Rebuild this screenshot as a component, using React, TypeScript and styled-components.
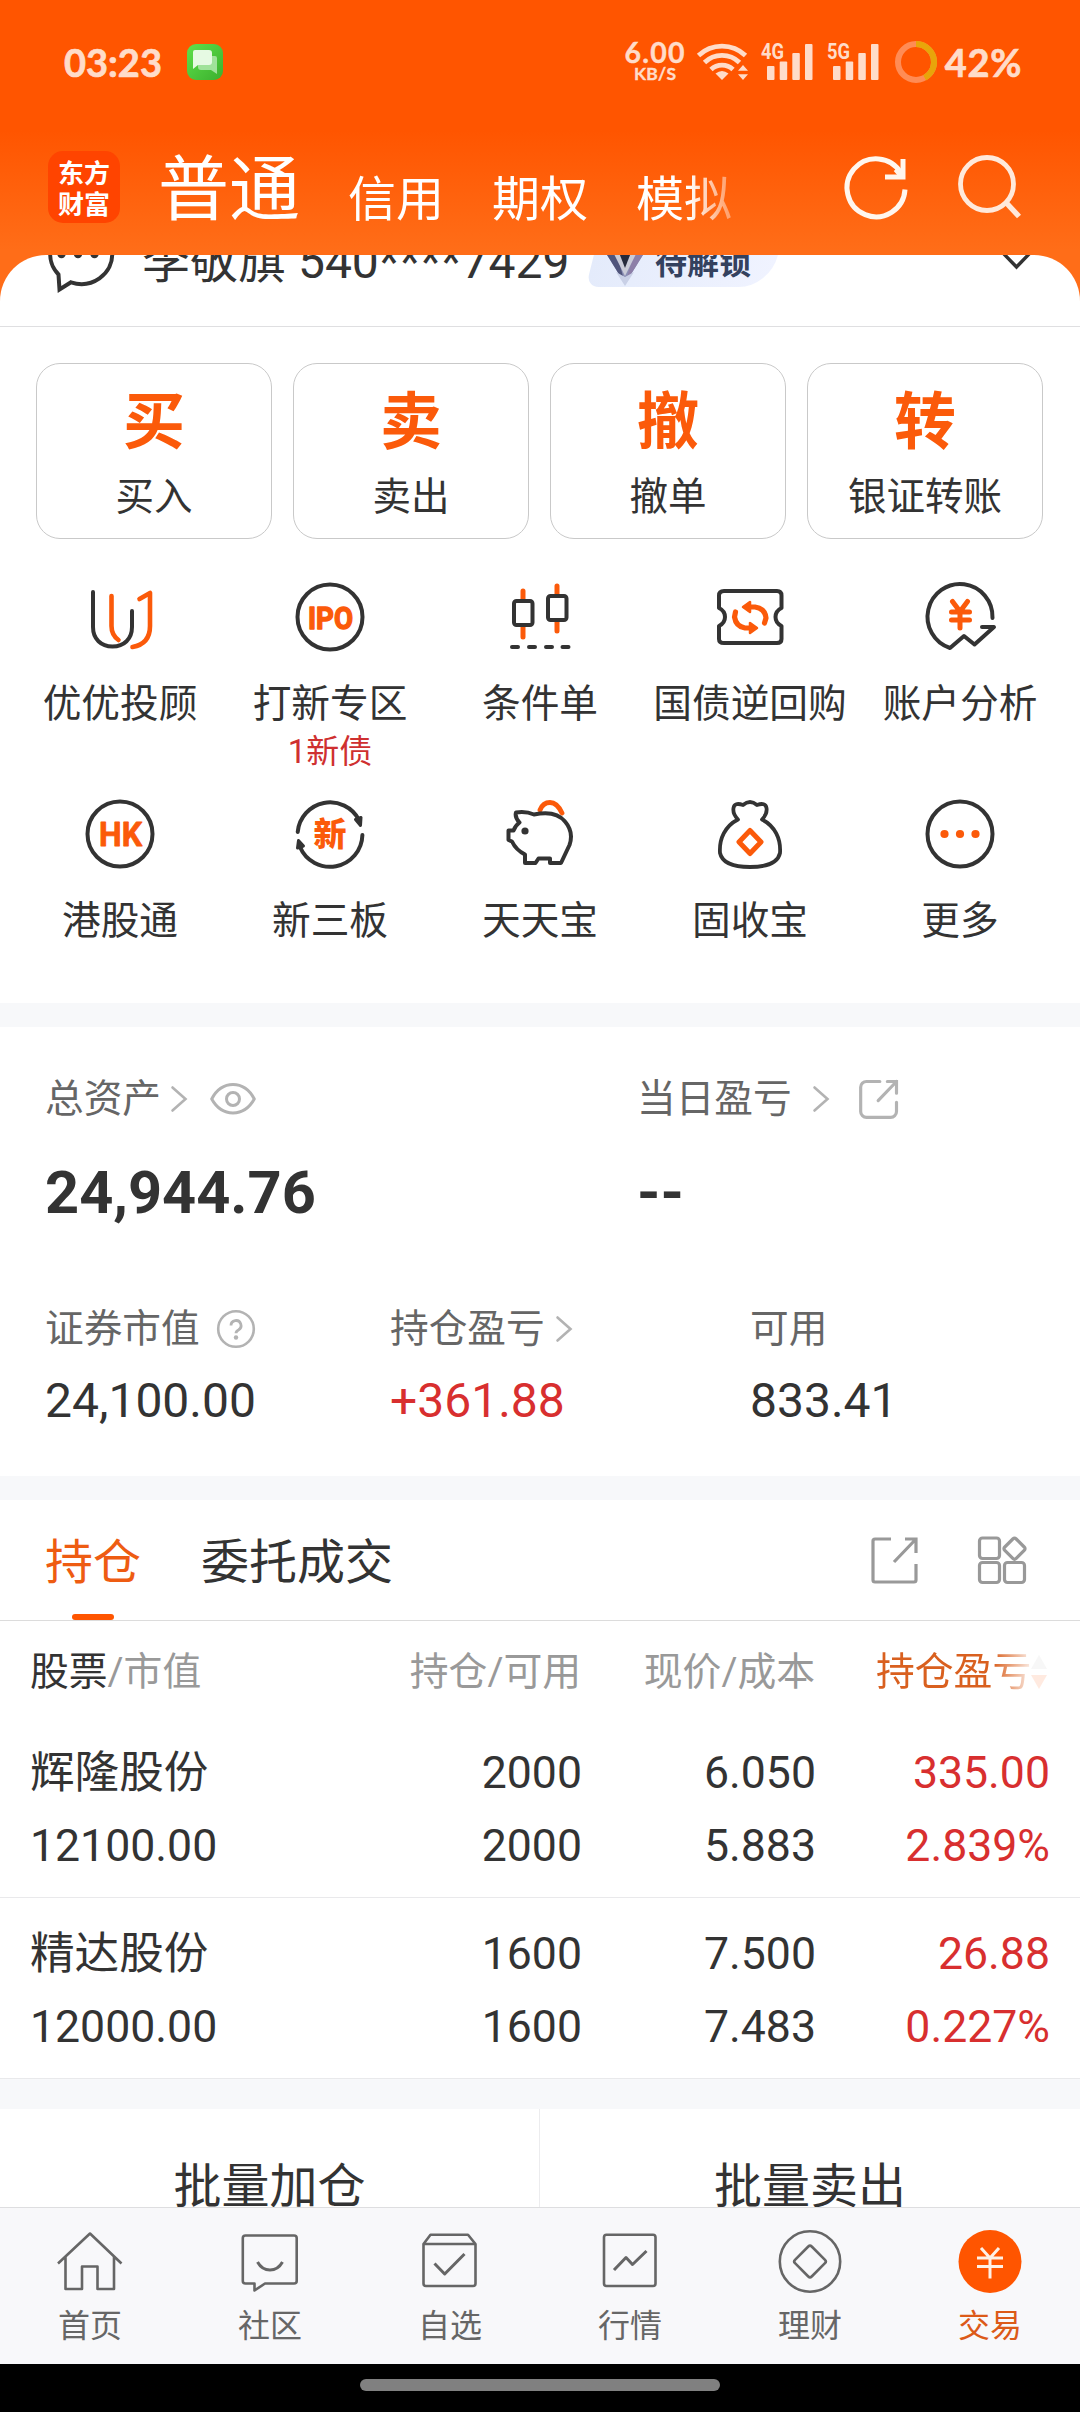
import React from "react";
import styled, { createGlobalStyle } from "styled-components";

const ORANGE = "#ff5500";
const INK = "#333333";
const RED = "#d82f2f";
const PALE = "#ffdcc9";

const GlobalStyle = createGlobalStyle`
  * { box-sizing: border-box; }
  body {
    margin: 0;
    background: #fff;
    color: ${INK};
    font-family: Roboto, "Noto Sans CJK SC", sans-serif;
  }
  svg { display: block; flex: none; overflow: visible; }
`;

const Screen = styled.div`
  display: flex;
  flex-direction: column;
  width: 1080px;
  height: 2412px;
  overflow: hidden;
  background: linear-gradient(#ff5500 0, #ff5500 130px, #ff6d18 250px, #ff6d18 100%);
`;

/* ---------- status bar ---------- */

const StatusBar = styled.header`
  display: flex;
  align-items: center;
  justify-content: space-between;
  height: 124px;
  padding: 0 58px 0 64px;
  color: ${PALE};
  font-family: Lato, sans-serif;
  font-weight: 700;
  -webkit-text-stroke: 0.7px ${PALE};
`;

const StatusGroup = styled.div`
  display: flex;
  align-items: center;
`;

const Clock = styled.span`
  width: 123px;
  font-size: 38px;
  line-height: 38px;
`;

const NetSpeed = styled.div`
  display: flex;
  flex-direction: column;
  align-items: center;
  width: 61px;
  margin-right: 11px;
  -webkit-text-stroke-width: 0.4px;
`;

const SpeedValue = styled.span`
  font-size: 28.5px;
  letter-spacing: 1.2px;
  line-height: 23px;
`;

const SpeedUnit = styled.span`
  font-size: 17.5px;
  letter-spacing: 0.3px;
  line-height: 20px;
`;

const Battery = styled.span`
  margin-left: 8px;
  font-size: 38px;
  letter-spacing: 0.7px;
  line-height: 38px;
`;

/* ---------- title bar ---------- */

const TitleBar = styled.div`
  display: flex;
  align-items: flex-start;
  height: 131px;
  padding-left: 48px;
`;

const Logo = styled.div`
  display: grid;
  place-content: center;
  width: 72px;
  height: 72px;
  margin-top: 27px;
  border-radius: 15px;
  background: #ff4400;
  color: #fff;
  font-family: "Noto Sans CJK SC", sans-serif;
  font-size: 26px;
  font-weight: 700;
  line-height: 31px;
  text-align: center;
`;

const Accounts = styled.nav`
  display: flex;
  align-items: flex-start;
  gap: 48px;
  width: 586px;
  margin-left: 38px;
  color: #fff;
  white-space: nowrap;
  mask-image: linear-gradient(90deg, #000 530px, rgba(0, 0, 0, 0.4) 570px);
`;

const AccountTab = styled.span<{ $active?: boolean }>`
  margin-top: ${(p) => (p.$active ? 30 : 52)}px;
  font-size: ${(p) => (p.$active ? 71 : 48)}px;
  line-height: ${(p) => (p.$active ? 72 : 48)}px;
`;

const TitleActions = styled.div`
  display: flex;
  gap: 40px;
  margin: 28px 0 0 98px;
`;

/* ---------- sheet ---------- */

const Sheet = styled.main`
  display: flex;
  flex-direction: column;
  height: 1952px;
  overflow: hidden;
  border-radius: 46px 46px 0 0;
  background: #fff;
`;

const AccountStrip = styled.div`
  flex: none;
  height: 72px;
  overflow: hidden;
  border-bottom: 1px solid #dfdfe1;
`;

const AccountRow = styled.div`
  display: flex;
  align-items: center;
  height: 80px;
  margin-top: -33px;
  padding: 0 46px 0 42px;
`;

const AccountName = styled.span`
  margin-left: 26px;
  font-size: 48px;
  line-height: 80px;
  white-space: pre;
`;

const LevelBadge = styled.div`
  display: flex;
  align-items: center;
  width: 184px;
  height: 49px;
  margin-left: 23px;
  color: #34415e;
  font-size: 32px;
  font-weight: 700;
  background: linear-gradient(90deg, #e4ebfb, #f0f3ff);
  border-radius: 14px 20px 34px 14px;
  transform: skewX(-14deg);
`;

const BadgeInner = styled.div`
  display: flex;
  align-items: center;
  gap: 9px;
  padding-left: 12px;
  line-height: 44px;
  transform: skewX(14deg);
`;

const Spacer = styled.div`
  flex: 1;
`;

const Trades = styled.section`
  display: grid;
  flex: none;
  grid-template-columns: repeat(4, 236px);
  gap: 21px;
  padding: 36px 36px 0;
`;

const TradeCard = styled.button`
  display: flex;
  flex-direction: column;
  align-items: center;
  height: 176px;
  padding: 28px 0 0;
  border: 1px solid #c9c9c9;
  border-radius: 24px;
  background: #fff;
  color: ${INK};
  font-family: inherit;
`;

const TradeGlyph = styled.span`
  color: #fb5a0a;
  font-size: 62px;
  font-weight: 700;
  line-height: 62px;
`;

const TradeLabel = styled.span`
  margin-top: 23px;
  font-size: 38.5px;
  line-height: 40px;
`;

const Services = styled.section`
  display: grid;
  flex: none;
  grid-template-columns: repeat(5, 210px);
  grid-template-rows: 217px 206px;
  padding: 41px 15px 0;
`;

const Service = styled.div`
  display: flex;
  flex-direction: column;
  align-items: center;
`;

const ServiceLabel = styled.span`
  margin-top: 32px;
  font-size: 38.7px;
  line-height: 40px;
  white-space: nowrap;
`;

const ServiceNote = styled.span`
  margin-top: 11px;
  color: #cf3030;
  font-size: 33px;
  line-height: 34px;
`;

const Band = styled.div<{ $h: number }>`
  flex: none;
  height: ${(p) => p.$h}px;
  background: #f7f8fa;
`;

/* ---------- assets ---------- */

const Assets = styled.section`
  flex: none;
  height: 449px;
  padding: 50px 0 0 45px;
`;

const AssetGrid = styled.div<{ $cols: string }>`
  display: grid;
  grid-template-columns: ${(p) => p.$cols};
`;

const AssetLabel = styled.div<{ $lift?: number }>`
  display: flex;
  align-items: center;
  height: 48px;
  padding-bottom: ${(p) => p.$lift ?? 0}px;
  color: #666;
  font-size: 38.7px;
  line-height: 48px;
`;

const Gap = styled.i<{ $w: number }>`
  width: ${(p) => p.$w}px;
`;

const Total = styled.div`
  margin: 38px 0 83px;
  font-size: 59.5px;
  font-weight: 700;
  line-height: 60px;
`;

const Amount = styled.div<{ $up?: boolean }>`
  margin-top: 23px;
  color: ${(p) => (p.$up ? RED : INK)};
  font-size: 48px;
  line-height: 48px;
`;

/* ---------- positions ---------- */

const TabBar = styled.div`
  display: flex;
  flex: none;
  align-items: center;
  height: 121px;
  padding: 0 53px 0 45px;
  border-bottom: 1px solid #dcdcdc;
`;

const Tab = styled.span<{ $active?: boolean }>`
  position: relative;
  height: 120px;
  margin-right: 60px;
  color: ${(p) => (p.$active ? "#ee5c12" : INK)};
  font-size: 48px;
  line-height: 126px;

  &::after {
    content: "";
    display: ${(p) => (p.$active ? "block" : "none")};
    position: absolute;
    bottom: 0;
    left: 27px;
    width: 42px;
    height: 6px;
    border-radius: 3px;
    background: ${ORANGE};
  }
`;

const Cols = styled.div`
  display: grid;
  flex: none;
  grid-template-columns: 315px 236px 234px 234px;
  padding: 0 31px 0 30px;
  text-align: right;
`;

const HeadRow = styled(Cols)`
  height: 96px;
  padding-top: 7px;
  color: #999;
  font-size: 38.8px;
  line-height: 87px;
`;

const HeadFirst = styled.span`
  text-align: left;
`;

const Dark = styled.b`
  color: ${INK};
  font-weight: 400;
`;

const SortHead = styled.div`
  display: flex;
  align-items: center;
  height: 87px;
  padding-left: 61px;
  color: #d9601f;
  white-space: nowrap;
  mask-image: linear-gradient(90deg, #000 178px, rgba(0, 0, 0, 0.12) 216px);
`;

const StockRow = styled(Cols)`
  height: 181px;
  padding-top: 20px;
  border-bottom: 1px solid #e9e9eb;
  font-size: 44.6px;
`;

const Cell = styled.div<{ $first?: boolean; $up?: boolean }>`
  margin-right: -1px;
  color: ${(p) => (p.$up ? RED : "inherit")};
  text-align: ${(p) => (p.$first ? "left" : "right")};
  line-height: 73px;
`;

const Batch = styled.section`
  display: grid;
  flex: none;
  grid-template-columns: 540px 540px;
  height: 98px;
  overflow: hidden;
`;

const BatchButton = styled.div`
  height: 110px;
  padding-top: 54px;
  font-size: 48px;
  line-height: 48px;
  text-align: center;

  &:first-child {
    border-right: 1px solid #ececee;
  }
`;

/* ---------- bottom navigation ---------- */

const BottomNav = styled.nav`
  display: grid;
  flex: none;
  grid-template-columns: repeat(6, 180px);
  height: 157px;
  border-top: 1px solid #dedee0;
  background: #f8f8fa;
`;

const NavItem = styled.div<{ $active?: boolean }>`
  display: flex;
  flex-direction: column;
  align-items: center;
  padding-top: 17px;
  color: ${(p) => (p.$active ? "#dc5a18" : "#666")};
`;

const NavLabel = styled.span`
  margin-top: 9px;
  font-size: 32px;
  line-height: 40px;
`;

const GestureBar = styled.div`
  display: flex;
  flex: none;
  justify-content: center;
  height: 48px;
  padding-top: 15px;
  background: #000;
`;

const Handle = styled.div`
  width: 360px;
  height: 12px;
  border-radius: 6px;
  background: #808080;
`;

/* ---------- icons ---------- */

const MessageIcon = () => (
  <svg width="36" height="36" viewBox="0 0 36 36">
    <defs>
      <linearGradient id="msg" x1="0" y1="0" x2="1" y2="1">
        <stop offset="0" stopColor="#5fe04a" />
        <stop offset="1" stopColor="#3bb02e" />
      </linearGradient>
    </defs>
    <rect width="36" height="36" rx="9" fill="url(#msg)" />
    <path d="M13 12h15a2 2 0 0 1 2 2v16l-6-4H14a3 3 0 0 1-3-3v-8z" fill="#a0e29a" />
    <path d="M8 6h14a3 3 0 0 1 3 3v9a3 3 0 0 1-3 3H11l-5 4V8a2 2 0 0 1 2-2z" fill="#e6fae3" />
  </svg>
);

const WifiIcon = () => (
  <svg width="52" height="38" viewBox="0 0 52 38" fill="none" stroke={PALE} strokeWidth="4.8">
    <path d="M1.5 12.5a34 34 0 0 1 47 0" />
    <path d="M7.5 19.5a25 25 0 0 1 35 0" />
    <path d="M14 26.5a16 16 0 0 1 22 0" />
    <path d="M25 37l-6.500-6.500q6.500-5 13 0z" fill={PALE} stroke="none" />
    <path d="M46 22l5 5.800h-10zM46 37l5-5.800h-10z" fill={PALE} stroke="none" />
  </svg>
);

const SignalIcon = ({ label }: { label: string }) => (
  <svg width="54" height="38" viewBox="0 0 54 38" fill={PALE}>
    <text x="0" y="16" fontSize="22" fontFamily="Roboto, sans-serif" fontWeight="700" textLength="23" lengthAdjust="spacingAndGlyphs" stroke="none">
      {label}
    </text>
    <rect x="6" y="23" width="7.500" height="14" rx="1" />
    <rect x="18.700" y="18.500" width="7.500" height="18.500" rx="1" />
    <rect x="31.300" y="10" width="7.500" height="27" rx="1" />
    <rect x="44" y="1" width="7.500" height="36" rx="1" />
  </svg>
);

const BatteryRing = () => (
  <svg width="42" height="42" viewBox="0 0 42 42" fill="none" strokeWidth="6">
    <circle cx="21" cy="21" r="18" stroke="#ff8c55" />
    <path d="M21 3A18 18 0 0 1 29.700 36.800" stroke="#e8a50a" />
  </svg>
);

const RefreshIcon = () => (
  <svg width="70" height="70" viewBox="0 0 70 70" fill="none" stroke="#fff6ee" strokeWidth="5">
    <path d="M63 37.500A29 29 0 1 1 59 21" />
    <path d="M61 7V25H43" />
    <path d="M54 17l6 7" strokeWidth="6" />
  </svg>
);

const SearchIcon = () => (
  <svg width="70" height="70" viewBox="0 0 70 70" fill="none" stroke="#ffe9db" strokeWidth="4.800">
    <circle cx="35" cy="32" r="26.500" />
    <path d="M54 50.500L67 64.500" strokeWidth="5.500" />
  </svg>
);

const ChatIcon = () => (
  <svg width="74" height="80" viewBox="0 0 74 80" fill="none" stroke={INK} strokeWidth="4">
    <path d="M16.500 52.500A31 29.500 0 1 1 29 60.300L17.500 67.500Z" />
    <g fill={INK} stroke="none">
      <circle cx="19.500" cy="32" r="4.200" />
      <circle cx="36" cy="32" r="4.200" />
      <circle cx="52.500" cy="32" r="4.200" />
    </g>
  </svg>
);

const GemIcon = () => (
  <svg width="42" height="49" viewBox="0 0 42 49">
    <path d="M0 12h42L21 46z" fill="#8b8fb5" />
    <path d="M0 12h12L21 46z" fill="#50557c" />
    <path d="M42 12H31L21 46z" fill="#8d7fa8" />
    <path d="M8 12h26L21 38z" fill="#c9cbd8" />
    <path d="M14 12h14l-7 18z" fill="#252a3c" />
    <path d="M12 34l9 5 9-5-9 14z" fill="#c9d0e6" />
  </svg>
);

const DownIcon = () => (
  <svg width="34" height="24" viewBox="0 0 34 24" fill="none" stroke={INK} strokeWidth="3.400">
    <path d="M2 2l14.500 15L31 2" />
  </svg>
);

const Chevron = () => (
  <svg width="16" height="28" viewBox="0 0 16 28" fill="none" stroke="#b3b3b3" strokeWidth="2.600" strokeLinecap="round">
    <path d="M1.500 2.500L14.500 14 1.500 25.500" />
  </svg>
);

const EyeIcon = () => (
  <svg width="46" height="34" viewBox="0 0 46 34" fill="none" stroke="#b3b3b3" strokeWidth="3">
    <path d="M1.700 17C12-2.200 34-2.200 44.300 17 34 35.500 12 35.500 1.700 17z" strokeLinejoin="round" />
    <circle cx="23" cy="17" r="6.500" />
  </svg>
);

const HelpIcon = () => (
  <svg width="40" height="40" viewBox="0 0 40 40" fill="none" stroke="#b3b3b3" strokeWidth="2.600">
    <circle cx="20" cy="20" r="17.800" />
    <path d="M15 16.500a5 5 0 1 1 7.400 4.400q-2.400 1.200-2.400 3.400" strokeWidth="2.800" />
    <circle cx="20" cy="28.500" r="2.200" fill="#b3b3b3" stroke="none" />
  </svg>
);

const ShareIcon = ({ size, color, round }: { size: number; color: string; round: number }) => (
  <svg width={size} height={size} viewBox="0 0 48 48" fill="none" stroke={color} strokeWidth={round > 3 ? 3.8 : 3.2} strokeLinecap={round > 3 ? "round" : "butt"}>
    <path d={`M${round > 3 ? 25 : 20} 3H${2 + round}a${round} ${round} 0 0 0-${round} ${round}V${46 - round}a${round} ${round} 0 0 0 ${round} ${round}H${45 - round}a${round} ${round} 0 0 0 ${round}-${round}V28`} />
    <path d="M34 3H45V17M45 3L23 26" />
  </svg>
);

const ModulesIcon = () => (
  <svg width="50" height="50" viewBox="0 0 50 50" fill="none" stroke="#999" strokeWidth="3.200">
    <rect x="2.500" y="3" width="20" height="20.500" rx="3" />
    <rect x="2.500" y="27.500" width="20" height="20" rx="3" />
    <rect x="27.500" y="27.500" width="20" height="20" rx="3" />
    <path d="M35.800 4q1.700-1.700 3.400 0l8 8q1.700 1.700 0 3.400l-8 8q-1.700 1.700-3.400 0l-8-8q-1.700-1.700 0-3.400z" />
  </svg>
);

const SortIcon = () => (
  <svg width="16" height="36" viewBox="0 0 16 36">
    <path d="M8 1l8 14H0z" fill="#bbb" />
    <path d="M8 35l8-14H0z" fill={ORANGE} />
  </svg>
);

const O = "#fb5a0a";

const Glyph = ({ children }: { children: React.ReactNode }) => (
  <svg width="72" height="72" viewBox="0 0 72 72" fill="none" stroke={INK} strokeWidth="4" strokeLinecap="round" strokeLinejoin="round">
    {children}
  </svg>
);

const services: { label: string; note?: string; icon: React.ReactNode }[] = [
  {
    label: "优优投顾",
    icon: (
      <Glyph>
        <path d="M9 12V47C9 59 17 66.500 28.500 66.500S48 59 48 47V31" />
        <g stroke={O} strokeWidth="4.600">
          <path d="M27.500 16V46Q27.500 55 34.500 60" />
          <path d="M55.500 19L66 13V46Q66 64 48.500 67" />
        </g>
      </Glyph>
    ),
  },
  {
    label: "打新专区",
    note: "1新债",
    icon: (
      <Glyph>
        <circle cx="36" cy="37" r="32.500" />
        <text x="14" y="48.500" fontSize="31" fontWeight="700" fontFamily="Roboto, sans-serif" fill={O} stroke={O} strokeWidth="1.400" textLength="45" lengthAdjust="spacingAndGlyphs">
          IPO
        </text>
      </Glyph>
    ),
  },
  {
    label: "条件单",
    icon: (
      <Glyph>
        <path d="M19 11V57M53 6V51" stroke={O} strokeWidth="5" />
        <rect x="10" y="21" width="18.500" height="24" rx="2.500" fill="#fff" />
        <rect x="44" y="16" width="18.500" height="24" rx="2.500" fill="#fff" />
        <path d="M8 67h6M25 67h6M42 67h6M58.500 67h6" />
      </Glyph>
    ),
  },
  {
    label: "国债逆回购",
    icon: (
      <Glyph>
        <path d="M10 11H63Q67.500 11 67.500 15.500V28Q61.500 31 61.500 37T67.500 46V59Q67.500 63 63 63H10Q5 63 5 59V46Q11 43 11 37T5 28V15.500Q5 11 10 11z" />
        <g stroke={O} strokeWidth="5.200">
          <path d="M33 27H41Q51 28.500 52 38L50.500 43" />
          <path d="M39 48H31Q22 46.500 20.500 37L21.500 32" />
          <path d="M29 27L36 22V32zM43 48L36 43V53z" fill={O} strokeWidth="2.500" />
        </g>
      </Glyph>
    ),
  },
  {
    label: "账户分析",
    icon: (
      <Glyph>
        <path d="M68.500 38A32.500 32.800 0 1 0 26 68L40 56 50.500 64.500 70 47H58" />
        <path d="M28.500 21.500L36 31.500 43.500 21.500M27.500 32H45.500M27.500 40H45.500M36 32V48" stroke={O} strokeWidth="5" />
      </Glyph>
    ),
  },
  {
    label: "港股通",
    icon: (
      <Glyph>
        <circle cx="36" cy="37" r="32.500" />
        <text x="15" y="48.500" fontSize="33" fontWeight="700" fontFamily="Roboto, sans-serif" fill={O} stroke={O} strokeWidth="0.800" textLength="43" lengthAdjust="spacingAndGlyphs">
          HK
        </text>
      </Glyph>
    ),
  },
  {
    label: "新三板",
    icon: (
      <Glyph>
        <path d="M3.700 35A32.500 32.500 0 0 1 65 23M68.400 38A32.500 32.500 0 0 1 6 50" />
        <path d="M66.500 28.500L61.500 22.500 67 20.500zM4.500 43.500L9.500 49 3.500 51z" fill={INK} strokeWidth="3" />
        <text x="36" y="48.500" fontSize="33" fontWeight="900" fontFamily="Noto Sans CJK SC, sans-serif" fill={O} stroke="none" textAnchor="middle">
          新
        </text>
      </Glyph>
    ),
  },
  {
    label: "天天宝",
    icon: (
      <Glyph>
        <path d="M36 13Q39 5.500 46 5.500T58 16" stroke={O} strokeWidth="4.800" />
        <path
          d="M12 15.500Q22 14 30 17.500C44 14.500 55 17 61 24.500Q70 35 65.500 48L57 66H46V61.500H34.500L31.500 66H21V57.500Q12 53 8 44.500L4.500 43V33.500H9.500Q11 29 15.500 25.500Q10.500 20 12 15.500z"
          fill="#fff"
        />
        <circle cx="21" cy="34" r="3.600" fill={INK} stroke="none" />
      </Glyph>
    ),
  },
  {
    label: "固收宝",
    icon: (
      <Glyph>
        <path d="M24 22.500Q18.500 17 19.500 11T29 8Q36 2 43 8Q51.500 5 52.500 11T48 22.500C61 29 67 42 66 56Q63 70 36 70T6 56C5 42 11 29 24 22.500z" strokeWidth="3.800" />
        <path d="M36 33.500L47 45 36 56.500 25 45z" stroke={O} strokeWidth="5" />
      </Glyph>
    ),
  },
  {
    label: "更多",
    icon: (
      <Glyph>
        <circle cx="36" cy="37" r="32.500" />
        <g fill={O} stroke="none">
          <circle cx="20.500" cy="37" r="4.100" />
          <circle cx="36" cy="37" r="4.100" />
          <circle cx="51.500" cy="37" r="4.100" />
        </g>
      </Glyph>
    ),
  },
];

const NavGlyph = ({ children }: { children: React.ReactNode }) => (
  <svg width="72" height="72" viewBox="0 0 72 72" fill="none" stroke="#666" strokeWidth="2.600" strokeLinejoin="round">
    {children}
  </svg>
);

const navItems: { label: string; active?: boolean; icon: React.ReactNode }[] = [
  {
    label: "首页",
    icon: (
      <NavGlyph>
        <path d="M4 38.500L36 8.500 67.500 38.500M11.500 32V64H28V41.500H43.500V64H60V32" />
      </NavGlyph>
    ),
  },
  {
    label: "社区",
    icon: (
      <NavGlyph>
        <path d="M11.500 10.500H60Q62.700 10.500 62.700 13V56Q62.700 58.500 60 58.500H31L20.500 65.500V58.500H11.500Q8.800 58.500 8.800 56V13Q8.800 10.500 11.500 10.500z" />
        <path d="M23.500 37Q28 45 36 45T48.500 37" strokeWidth="3" />
      </NavGlyph>
    ),
  },
  {
    label: "自选",
    icon: (
      <NavGlyph>
        <path d="M9.500 19L16.500 9.800H54L61.500 19V58.500Q61.500 61 59 61H12Q9.500 61 9.500 58.500zH61.500" />
        <path d="M20.500 38.500L30.700 49 50.500 29" strokeWidth="3" />
      </NavGlyph>
    ),
  },
  {
    label: "行情",
    icon: (
      <NavGlyph>
        <rect x="10" y="9.800" width="51.500" height="51.200" rx="2.500" />
        <path d="M20 45L32 32.500 38.500 39.500 52.500 26" strokeWidth="3" />
      </NavGlyph>
    ),
  },
  {
    label: "理财",
    icon: (
      <NavGlyph>
        <circle cx="36" cy="36.500" r="30.200" />
        <path d="M34.300 21.500Q36 19.800 37.700 21.500L51 34.800Q52.700 36.500 51 38.200L37.700 51.500Q36 53.200 34.300 51.500L21 38.200Q19.300 36.500 21 34.800z" />
      </NavGlyph>
    ),
  },
  {
    label: "交易",
    active: true,
    icon: (
      <NavGlyph>
        <circle cx="36" cy="36.500" r="31.500" fill={ORANGE} stroke="none" />
        <path d="M27 23L36 33 45 23M23 33H49M23 41.500H49M36 33V53.500" stroke="#fff0e6" strokeWidth="3" />
      </NavGlyph>
    ),
  },
];

const trades = [
  ["买", "买入"],
  ["卖", "卖出"],
  ["撤", "撤单"],
  ["转", "银证转账"],
];

const stocks = [
  { name: "辉隆股份", value: "12100.00", held: "2000", free: "2000", price: "6.050", cost: "5.883", gain: "335.00", rate: "2.839%" },
  { name: "精达股份", value: "12000.00", held: "1600", free: "1600", price: "7.500", cost: "7.483", gain: "26.88", rate: "0.227%" },
];

export default function App() {
  return (
    <Screen>
      <GlobalStyle />
      <StatusBar>
        <StatusGroup>
          <Clock>03:23</Clock>
          <MessageIcon />
        </StatusGroup>
        <StatusGroup>
          <NetSpeed>
            <SpeedValue>6.00</SpeedValue>
            <SpeedUnit>KB/S</SpeedUnit>
          </NetSpeed>
          <WifiIcon />
          <Gap $w={12} />
          <SignalIcon label="4G" />
          <Gap $w={12} />
          <SignalIcon label="5G" />
          <Gap $w={14} />
          <BatteryRing />
          <Battery>42%</Battery>
        </StatusGroup>
      </StatusBar>

      <TitleBar>
        <Logo>
          <span>东方</span>
          <span>财富</span>
        </Logo>
        <Accounts>
          <AccountTab $active>普通</AccountTab>
          <AccountTab>信用</AccountTab>
          <AccountTab>期权</AccountTab>
          <AccountTab>模拟</AccountTab>
        </Accounts>
        <TitleActions>
          <RefreshIcon />
          <SearchIcon />
        </TitleActions>
      </TitleBar>

      <Sheet>
        <AccountStrip>
          <AccountRow>
            <ChatIcon />
            <AccountName>李敬旗 540****7429</AccountName>
            <LevelBadge>
              <BadgeInner>
                <GemIcon />
                待解锁
              </BadgeInner>
            </LevelBadge>
            <Spacer />
            <DownIcon />
          </AccountRow>
        </AccountStrip>

        <Trades>
          {trades.map(([glyph, label]) => (
            <TradeCard key={label}>
              <TradeGlyph>{glyph}</TradeGlyph>
              <TradeLabel>{label}</TradeLabel>
            </TradeCard>
          ))}
        </Trades>

        <Services>
          {services.map((s) => (
            <Service key={s.label}>
              {s.icon}
              <ServiceLabel>{s.label}</ServiceLabel>
              {s.note && <ServiceNote>{s.note}</ServiceNote>}
            </Service>
          ))}
        </Services>

        <Band $h={24} />

        <Assets>
          <AssetGrid $cols="592px 1fr">
            <div>
              <AssetLabel $lift={5}>
                总资产
                <Gap $w={10} />
                <Chevron />
                <Gap $w={23} />
                <EyeIcon />
              </AssetLabel>
              <Total>24,944.76</Total>
            </div>
            <div>
              <AssetLabel $lift={4}>
                当日盈亏
                <Gap $w={21} />
                <Chevron />
                <Gap $w={30} />
                <ShareIcon size={40} color="#b3b3b3" round={7} />
              </AssetLabel>
              <Total>--</Total>
            </div>
          </AssetGrid>
          <AssetGrid $cols="345px 360px 1fr">
            <div>
              <AssetLabel $lift={2}>
                证券市值
                <Gap $w={16} />
                <HelpIcon />
              </AssetLabel>
              <Amount>24,100.00</Amount>
            </div>
            <div>
              <AssetLabel $lift={2}>
                持仓盈亏
                <Gap $w={11} />
                <Chevron />
              </AssetLabel>
              <Amount $up>+361.88</Amount>
            </div>
            <div>
              <AssetLabel $lift={2}>可用</AssetLabel>
              <Amount>833.41</Amount>
            </div>
          </AssetGrid>
        </Assets>

        <Band $h={24} />

        <TabBar>
          <Tab $active>持仓</Tab>
          <Tab>委托成交</Tab>
          <Spacer />
          <ShareIcon size={48} color="#999" round={2} />
          <Gap $w={58} />
          <ModulesIcon />
        </TabBar>

        <HeadRow>
          <HeadFirst>
            <Dark>股票</Dark>/市值
          </HeadFirst>
          <span>持仓/可用</span>
          <span>现价/成本</span>
          <SortHead>
            持仓盈亏
            <SortIcon />
          </SortHead>
        </HeadRow>

        {stocks.map((s) => (
          <StockRow key={s.name}>
            <Cell $first>
              {s.name}
              <br />
              {s.value}
            </Cell>
            <Cell>
              {s.held}
              <br />
              {s.free}
            </Cell>
            <Cell>
              {s.price}
              <br />
              {s.cost}
            </Cell>
            <Cell $up>
              {s.gain}
              <br />
              {s.rate}
            </Cell>
          </StockRow>
        ))}

        <Band $h={30} />

        <Batch>
          <BatchButton>批量加仓</BatchButton>
          <BatchButton>批量卖出</BatchButton>
        </Batch>
      </Sheet>

      <BottomNav>
        {navItems.map((n) => (
          <NavItem key={n.label} $active={n.active}>
            {n.icon}
            <NavLabel>{n.label}</NavLabel>
          </NavItem>
        ))}
      </BottomNav>
      <GestureBar>
        <Handle />
      </GestureBar>
    </Screen>
  );
}
